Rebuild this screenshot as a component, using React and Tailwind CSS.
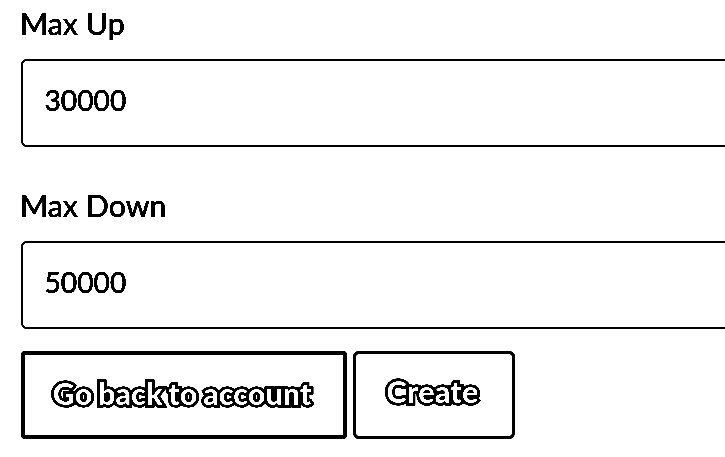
function Field({ label, value }) {
  return (
    <label className="block h-[182px]">
      <span className="-ml-px block h-[59px] pt-[3px] text-[30.4px] leading-[40px] [-webkit-text-stroke:0.3px_black]">{label}</span>
      <input
        className="block h-[88px] w-[800px] rounded-[6px] border-2 border-black bg-white px-[21.5px] pt-0 pb-[7px] text-[28.2px] outline-none [-webkit-text-stroke:0.3px_black]"
        defaultValue={value}
      />
    </label>
  );
}

function Button({ className, children }) {
  return (
    <button
      className={`h-[88px] shrink-0 border-black bg-white text-[30.5px] font-black whitespace-nowrap text-white [-webkit-text-stroke:5.2px_black] [paint-order:stroke_fill] [word-spacing:-1.4px] ${className}`}
    >
      {children}
    </button>
  );
}

export default function App() {
  return (
    <main className="h-[457px] w-full overflow-hidden bg-white pl-[21px] font-['Lato',sans-serif] text-black brightness-75 contrast-[8]">
      <Field label="Max Up" value="30000" />
      <Field label="Max Down" value="50000" />
      <div className="-mt-[13px] flex gap-[6px]">
        <Button className="w-[326px] rounded-[4px] border-4 pr-[4px] pb-[3px]">Go back to account</Button>
        <Button className="w-[162px] rounded-[6px] border-3 pr-[3px] pb-[6px] tracking-[0.2px]">Create</Button>
      </div>
    </main>
  );
}
